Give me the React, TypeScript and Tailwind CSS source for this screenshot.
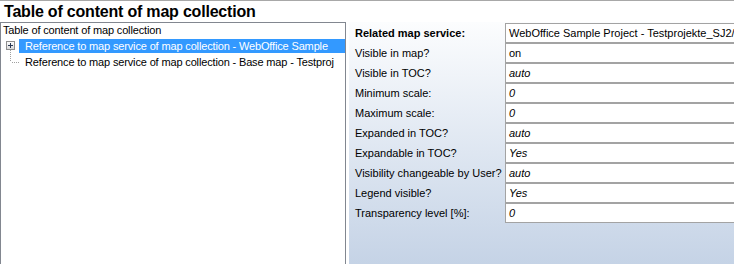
import React from "react";

const rows: { label: string; value: string; italic?: boolean; bold?: boolean }[] = [
  { label: "Related map service:", value: "WebOffice Sample Project - Testprojekte_SJ2/W", bold: true },
  { label: "Visible in map?", value: "on" },
  { label: "Visible in TOC?", value: "auto", italic: true },
  { label: "Minimum scale:", value: "0", italic: true },
  { label: "Maximum scale:", value: "0", italic: true },
  { label: "Expanded in TOC?", value: "auto", italic: true },
  { label: "Expandable in TOC?", value: "Yes", italic: true },
  { label: "Visibility changeable by User?", value: "auto", italic: true },
  { label: "Legend visible?", value: "Yes", italic: true },
  { label: "Transparency level [%]:", value: "0", italic: true },
];

function ExpandGutter() {
  return (
    <svg width="18" height="16" viewBox="0 0 18 16" className="shrink-0">
      <defs>
        <linearGradient id="eg" x1="0" y1="0" x2="0" y2="1">
          <stop offset="0" stopColor="#ffffff" />
          <stop offset="1" stopColor="#d8d8d8" />
        </linearGradient>
      </defs>
      <rect x="5.5" y="3.5" width="8" height="8" fill="url(#eg)" stroke="#8f8f8f" />
      <line x1="7" y1="7.5" x2="12" y2="7.5" stroke="#2b3a55" />
      <line x1="9.5" y1="5" x2="9.5" y2="10" stroke="#2b3a55" />
      <line x1="9.5" y1="12" x2="9.5" y2="16" stroke="#a0a0a0" strokeDasharray="1 1" />
    </svg>
  );
}

function LeafGutter() {
  return (
    <svg width="18" height="16" viewBox="0 0 18 16" className="shrink-0">
      <line x1="9.5" y1="0" x2="9.5" y2="8" stroke="#a0a0a0" strokeDasharray="1 1" />
      <line x1="11" y1="8.5" x2="18" y2="8.5" stroke="#a0a0a0" strokeDasharray="1 1" />
    </svg>
  );
}

export default function App() {
  return (
    <div className="w-[734px] h-[264px] bg-white overflow-hidden border-t border-[#a8a8a8] font-['Liberation_Sans',Arial,sans-serif] text-black">
      <div className="h-[21px] pl-[4px] text-[16px] font-bold leading-[21px] tracking-[-0.2px]">
        Table of content of map collection
      </div>
      <div className="flex h-[242px]">
        <div className="w-[346px] shrink-0 border border-b-0 border-[#828790] bg-white text-[11px] tracking-[-0.15px]">
          <div className="h-[15px] pl-[2px] leading-[15px]">Table of content of map collection</div>
          <div className="flex h-[16px] items-center">
            <ExpandGutter />
            <div className="flex-1 h-[14px] bg-[#3399ff] text-white pl-[6px] leading-[14px] whitespace-nowrap overflow-hidden">
              Reference to map service of map collection - WebOffice Sample
            </div>
          </div>
          <div className="flex h-[16px] items-center">
            <LeafGutter />
            <div className="flex-1 h-[14px] pl-[6px] leading-[14px] whitespace-nowrap overflow-hidden">
              Reference to map service of map collection - Base map - Testproj
            </div>
          </div>
        </div>
        <div className="w-[3px] shrink-0" />
        <div className="flex-1 overflow-hidden bg-linear-to-b from-[#fcfdfe] to-[#c5d3e6] text-[11px] pt-[1px]">
          {rows.map((r) => (
            <div key={r.label} className="flex h-[20px] items-center">
              <div className={"w-[156px] shrink-0 pl-[6px] whitespace-nowrap " + (r.bold ? "font-bold" : "")}>
                {r.label}
              </div>
              <div
                className={
                  "w-[260px] shrink-0 h-[20px] border border-[#a3a3a3] bg-white pl-[3px] leading-[18px] whitespace-nowrap overflow-hidden " +
                  (r.italic ? "italic" : "")
                }
              >
                {r.value}
              </div>
            </div>
          ))}
        </div>
      </div>
    </div>
  );
}
